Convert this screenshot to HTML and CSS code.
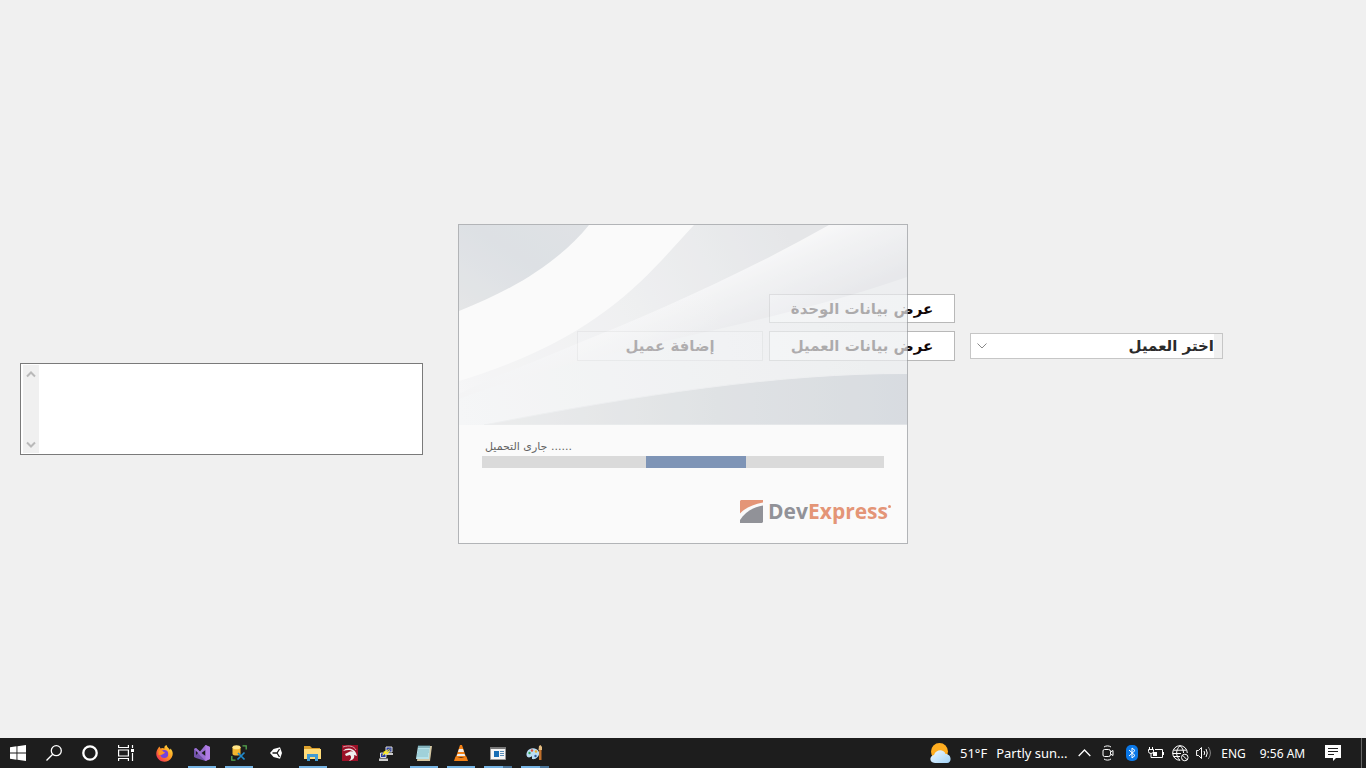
FILE: index.html
```html
<!DOCTYPE html>
<html lang="ar">
<head>
<meta charset="utf-8">
<title>اختر العميل</title>
<link rel="stylesheet" href="styles.css">
</head>
<body>
<div class="desktop">
  <main class="form">
    <div class="memo">
      <div class="memo-scroll" aria-hidden="true">
        <svg width="10" height="8" viewBox="0 0 10 8"><path d="M1 6.500 5 2.500 9 6.500"/></svg>
        <svg width="10" height="8" viewBox="0 0 10 8"><path d="M1 1.500 5 5.500 9 1.500"/></svg>
      </div>
      <textarea class="memo-text" dir="rtl" aria-label="ملاحظات"></textarea>
    </div>
    <div class="actions" dir="rtl">
      <button class="action unit" type="button">عرض بيانات الوحدة</button>
      <button class="action" type="button">عرض بيانات العميل</button>
      <button class="action" type="button" disabled>إضافة عميل</button>
    </div>
    <div class="combo">
      <svg class="combo-arrow" width="10" height="6" viewBox="0 0 10 6"><path d="M.5.5 5 5 9.500.5"/></svg>
      <select class="combo-select" dir="rtl" aria-label="اختر العميل"><option>اختر العميل</option></select>
    </div>
    <section class="splash" role="dialog" aria-label="DevExpress">
      <svg class="splash-art" viewBox="0 0 448 200" preserveAspectRatio="none" aria-hidden="true">
        <defs>
          <linearGradient id="a" x1="0" y1="1" x2="1" y2="0"><stop offset="0" stop-color="#e0e2e4"/><stop offset=".55" stop-color="#d5dae0"/><stop offset="1" stop-color="#d9dde1"/></linearGradient>
          <linearGradient id="b" gradientUnits="userSpaceOnUse" x1="0" y1="170" x2="330" y2="10"><stop offset="0" stop-color="#f9f9fa"/><stop offset=".55" stop-color="#eeeff1"/><stop offset="1" stop-color="#e1e3e6"/></linearGradient>
          <linearGradient id="c" gradientUnits="userSpaceOnUse" x1="285" y1="35" x2="315" y2="105"><stop offset="0" stop-color="#fcfcfd"/><stop offset=".35" stop-color="#f2f3f5"/><stop offset="1" stop-color="#e4e5e9"/></linearGradient>
          <linearGradient id="d" gradientUnits="userSpaceOnUse" x1="0" y1="190" x2="448" y2="90"><stop offset="0" stop-color="#f8f9fa"/><stop offset=".5" stop-color="#f1f3f5"/><stop offset="1" stop-color="#eceef0"/></linearGradient>
          <linearGradient id="e"><stop offset="0" stop-color="#eaebec"/><stop offset=".55" stop-color="#d9dde0"/><stop offset="1" stop-color="#ced3da"/></linearGradient>
          <linearGradient id="f"><stop offset="0" stop-color="#f6f7f8" stop-opacity=".9"/><stop offset=".6" stop-color="#fafafb" stop-opacity="0"/></linearGradient>
        </defs>
        <path fill="#fff" d="M0 0H448V200H0Z"/>
        <path fill="url(#a)" d="M0 0H130C104 32 62 62 0 86Z"/>
        <path fill="url(#b)" d="M235 0C189 49 145 112 0 156V200H448V0Z"/>
        <path fill="url(#c)" d="M370 0C285 48 195 88 115 120 70 139 30 154 0 169V200H448V0Z"/>
        <path fill="url(#f)" d="M370 0C285 48 195 88 115 120 70 139 30 154 0 169V200H448V0Z"/>
        <path fill="url(#d)" d="M448 52C365 81 270 102 180 122 110 138 50 155 0 174V200H448Z"/>
        <path fill="url(#e)" stroke="#edeff1" d="M449 148.500C320 148 180 170 25 200H449Z"/>
      </svg>
      <div class="splash-body">
        <label class="splash-label" for="load">جارى التحميل ......</label>
        <div class="load" id="load" role="progressbar" aria-label="جارى التحميل"><div class="load-bar"></div></div>
        <div class="brand">
          <svg width="23" height="23" viewBox="0 0 23 23" aria-hidden="true"><path fill="#e06f45" d="M1 0H23V2.500C13 4.500 5 8 0 13.500V1Z"/><path fill="#6a6b74" d="M23 5.500V22L22 23H0V20C5 12 13 7 23 5.500Z"/></svg>
          <span class="brand-name">Dev<span class="brand-accent">Express</span></span><span class="brand-dot"></span>
        </div>
      </div>
    </section>
  </main>
  <nav class="taskbar" aria-label="Taskbar">
    <div class="system">
      <button class="task" aria-label="Start"><svg width="16" height="16" viewBox="0 0 16 16" fill="#fff"><path d="M0 2.200 6.500 1.300V7.600H0ZM7.400 1.200 16 0V7.600H7.400ZM0 8.400H6.500V14.700L0 13.800ZM7.400 8.400H16V16L7.400 14.800Z"/></svg></button>
      <button class="task" aria-label="Search"><svg width="16" height="16" viewBox="0 0 16 16" fill="none" stroke="#fff" stroke-width="1.300"><circle cx="10.300" cy="5.700" r="5"/><path d="M6.700 9.300.5 15.500"/></svg></button>
      <button class="task" aria-label="Cortana"><svg width="16" height="16" viewBox="0 0 16 16" fill="none" stroke="#fff" stroke-width="2.300"><circle cx="8" cy="8" r="6.700"/></svg></button>
      <button class="task" aria-label="Task view"><svg width="16" height="16" viewBox="0 0 16 16" fill="none" stroke="#fff" stroke-width="1.200"><path d="M.6 0V2.500H10.400V0M.6 5H10.400V11H.6ZM.6 16V13.500H10.400V16M14.500 0V3M14.500 8V16"/><path fill="#fff" stroke="none" d="M13 4H16V7H13Z"/></svg></button>
    </div>
    <div class="apps">
      <button class="task" aria-label="Firefox"><svg width="17" height="17" viewBox="0 0 17 17"><defs><linearGradient id="ff" x1="1" y1="0" x2="0" y2="1"><stop stop-color="#fff24a"/><stop offset=".45" stop-color="#ff9820"/><stop offset="1" stop-color="#ed1762"/></linearGradient></defs><path fill="url(#ff)" d="M2 3.500 3.300 1.500 4.500 3.500C6 2.500 7.500 3 8.500 3.500 8 2 9 .5 10.500 0 11 2.500 13 3 14 5L14.500 3.500C17 6 17.500 9.500 15.500 12.800 13 17 7 18 3.300 15-.5 12-.5 7 2 3.500Z"/><circle cx="8.300" cy="9" r="3.900" fill="#7542dd"/><path fill="#ff961f" d="M2.500 6C4.500 4.500 7 5.500 7.500 7L9 7.300C8.500 9 6.500 8.500 6.200 9.700L2.500 10Z"/></svg></button>
      <button class="task open" aria-label="Visual Studio"><svg width="16" height="16" viewBox="0 0 16 16"><path fill="#7252aa" d="M0 4 2 3 11.500 12.500V16L2 13 0 12Z"/><path fill="#9a70d1" d="M11.500 0 16 2V14L11.500 16 2 6 0 4 2 3 6 6.500Z"/><path fill="#1d1d1d" d="M2 6V10L4 8ZM11.500 5V11L7.500 8Z"/><path fill="#b07be5" d="M11.500 0 16 2V14L11.500 16Z"/></svg></button>
      <button class="task open" aria-label="Database tools"><svg width="16" height="16" viewBox="0 0 16 16"><path fill="none" stroke="#55aa50" stroke-width="1.300" d="M11.500.8H15.200V4.500M.8 11V15.200H4.500"/><path fill="#f3b62e" d="M1.500 2V9C2 11 9 11 9.500 9V2Z"/><ellipse cx="5.500" cy="2.200" rx="4" ry="2" fill="#ffe487"/><path fill="none" stroke="#218bcc" stroke-width="1.700" d="M7 8 13.500 14.500M13.500 7.500 6.500 14.500"/></svg></button>
      <button class="task" aria-label="Unity"><svg width="12" height="12" viewBox="0 0 12 12"><path fill="#fff" d="M0 6 3.500 2 10 .3 12 6 10 11.700 3.500 10Z"/><path fill="none" stroke="#1d1d1d" stroke-width="1.300" d="M2.500 6H7L9.500 2M7 6 9.500 10"/></svg></button>
      <button class="task open" aria-label="File Explorer"><svg width="17" height="15" viewBox="0 0 17 15"><path fill="#dca02c" d="M0 0H6L8 2H16V5H0Z"/><path fill="#ffdc79" d="M0 3H17V13H0Z"/><path fill="#419bd2" d="M3 8H14V15H11V11H6V15H3Z"/></svg></button>
      <button class="task" aria-label="Dragon"><svg width="16" height="16" viewBox="0 0 16 16"><path fill="#9b1027" d="M0 0H16V16H0Z"/><path fill="#eee" d="M1 6C4 2 12 3 14 8L15 11 12 10C13 13 11 15 7 16 9 14 10 12 8 10L4 11 3 9 7 7C8 6 10 6 11 7 9 4 5 5 1 6Z"/><path fill="none" stroke="#d9a0a8" d="M1 2C7 0 12 1 14 5"/></svg></button>
      <button class="task" aria-label="PuTTY"><svg width="15" height="15" viewBox="0 0 15 15"><g fill="#283dac" stroke="#ddd"><path d="M7 1H13V6H7ZM1.500 7H7V11.500H1.500Z"/></g><path fill="#ccc" d="M6 7H14V9H6ZM0 12.500H9V15H0Z"/><path fill="#ffed22" d="M12 2 7 6H9L3 10 5 6H4Z"/><path fill="#ffed22" d="M12 3 8 9 7 7Z"/></svg></button>
      <button class="task open" aria-label="Notepad"><svg width="16" height="16" viewBox="0 0 16 16"><path fill="#d3c6a2" d="M3 1H16L14 16H1Z"/><path fill="#b7e2ea" d="M2 1H14L13 14H0Z"/><path stroke="#548792" d="M3 0V3M5 0V3M7 0V3M9 0V3M11 0V3M13 0V3"/><path stroke="#75b1bd" stroke-width=".7" d="M2 5H13M2 7H13M1 9H12M1 11H12"/></svg></button>
      <button class="task open" aria-label="VLC"><svg width="14" height="16" viewBox="0 0 14 16"><path fill="#f38116" d="M6 0H8L12 12H2Z"/><path fill="#eee" d="M5 4H9L10 7H4ZM3.500 9H10.500L11.300 11H2.700Z"/><path fill="#f38116" d="M1.500 11.500H2.500C4 13 10 13 11.500 11.500H12.500L14 16H0Z"/></svg></button>
      <button class="task open many" aria-label="Application"><svg width="16" height="13" viewBox="0 0 16 13"><path fill="#f6f6f6" stroke="#999" d="M.5.5H15.500V12.500H.5Z"/><path fill="#777" d="M0 0H16V2H0Z"/><path fill="#176eb5" d="M4 4H9V10H4Z"/><path stroke="#5a8eb8" d="M10 4.500H14M10 6.500H14M10 8.500H14"/></svg></button>
      <button class="task open many" aria-label="Paint"><svg width="17" height="16" viewBox="0 0 17 16"><path fill="#b9dcf3" d="M1 7C3 2 11 2 13 7 14 11 10 15 6 14L6 11C3 14-1 12 1 7Z"/><circle cx="3.500" cy="8" r="1.200" fill="#33a35a"/><circle cx="6" cy="5.500" r="1.200" fill="#df4d3b"/><circle cx="10" cy="6.500" r="1.200" fill="#e7b22e"/><circle cx="9.500" cy="11" r="1.200" fill="#315b9c"/><path fill="#c1702b" d="M13 5H15.500V15H13Z"/><path fill="#e5bc80" d="M12.500 5 13 1 14.500 0 16 2V5Z"/></svg></button>
    </div>
    <div class="tray" lang="en">
      <button class="weather"><svg width="21" height="20" viewBox="0 0 21 20"><defs><linearGradient id="cl" x1="0" y1="0" x2="1" y2="1"><stop stop-color="#f3f9ff"/><stop offset="1" stop-color="#a0d3f8"/></linearGradient></defs><circle cx="9.500" cy="8.500" r="8.500" fill="#ffad20"/><path fill="url(#cl)" d="M5 20C-1 20-1 13 4 12 6 6 14 6 15.500 11 22 11 22 20 17 20Z"/></svg><span>51°F</span><span>Partly sun...</span></button>
      <button class="icon" aria-label="Show hidden icons"><svg width="13" height="8" viewBox="0 0 13 8"><path stroke-width="1.300" d="M.7 7 6.500 1 12.300 7"/></svg></button>
      <button class="icon" aria-label="Meet now"><svg width="12" height="16" viewBox="0 0 12 16"><path d="M2 2C4 .5 7 .5 9 2M2 14C4 15.500 7 15.500 9 14M2.500 4.500H6.500Q8.500 4.500 8.500 6.500V9.500Q8.500 11.500 6.500 11.500H2.500Q1 11.500 1 10V6Q1 4.500 2.500 4.500ZM8.500 7 11 5.500V10.500L8.500 9"/></svg></button>
      <button class="icon" aria-label="Bluetooth"><svg width="12" height="16" viewBox="0 0 12 16"><rect width="12" height="16" rx="5" fill="#0a78e8" stroke="none"/><path d="M3 5 9 10.500 6 13V3L9 5.500 3 11"/></svg></button>
      <button class="icon" aria-label="Battery"><svg width="16" height="12" viewBox="0 0 16 12"><path d="M1.500 0V2.500M4.500 0V2.500M.5 2.500H5.500V4.500Q5.500 6.500 3 6.500.5 6.500.5 4.500ZM3 6.500V10.500H14.500V2.500H7M15.500 5V8"/><path fill="#fff" stroke="none" d="M5 5H9V9H5Z"/></svg></button>
      <button class="icon" aria-label="Network"><svg width="17" height="17" viewBox="0 0 17 17"><path d="M15.300 8A7.300 7.300 0 1 0 8 15.300M8 .7C3.500 5 3.500 11 8 15.300M8 .7C10.500 3 11.500 5 11.500 8M1.500 5.200H14.500M.7 8.500H9M1.500 11.500H8"/><circle cx="12.800" cy="12.500" r="3.300"/><path d="m10.500 10.200 4.600 4.600"/></svg></button>
      <button class="icon" aria-label="Volume"><svg width="16" height="14" viewBox="0 0 16 14"><path d="M.6 4.500H2.500L5.500 1.500V12.500L2.500 9.500H.6ZM8 5Q9.300 7 8 9M10 3Q12.500 7 10 11"/><path stroke="#888" d="M12.300 1Q16.500 7 12.300 13"/></svg></button>
      <button class="lang">ENG</button>
      <button class="clock">9:56 AM</button>
      <button class="notice" aria-label="Notifications"><svg width="16" height="16" viewBox="0 0 16 16"><path fill="#fff" d="M0 0H16V13H11L8 16V13H0Z"/><path stroke="#1d1d1d" d="M3 3.500H13M3 6.500H13M3 9.500H9"/></svg></button>
      <button class="peek" aria-label="Show desktop"></button>
    </div>
  </nav>
</div>
</body>
</html>
```
FILE: styles.css
```css
* { box-sizing: border-box; }
body { margin: 0; background: #f0f0f0; font-family: "Noto Sans", "Open Sans", sans-serif; }
button { margin: 0; padding: 0; border: 0; background: none; color: inherit; font: inherit; }
svg { display: block; flex: none; }

.desktop { display: flex; flex-direction: column; min-height: 100vh; }

.form {
  position: relative;
  flex: 1;
  display: flex;
  align-items: flex-start;
  padding: 294px 143px 0 20px;
}
.memo {
  flex: 0 1 403px;
  display: flex;
  height: 92px;
  margin-top: 69px;
  padding: 1px 2px;
  border: 1px solid #7a7a7a;
  background: #fff;
}
.memo-scroll {
  display: flex;
  flex-direction: column;
  align-items: center;
  justify-content: space-between;
  width: 16px;
  padding: 5px 0 4px;
  background: #f0f0f0;
}
.memo-scroll path { fill: none; stroke: #b9b9b9; stroke-width: 2; }
.memo-text { flex: 1; min-width: 0; border: 0; resize: none; outline: 0; overflow: hidden; background: #fff; }

.actions {
  display: grid;
  grid-template-columns: 186px 186px;
  gap: 8px 6px;
  margin-left: auto;
}
.action {
  height: 30px;
  border: 1px solid #b8b8b8;
  background: #fff;
  color: #140808;
  font: bold 15px/20px "DejaVu Sans", sans-serif;
}
.action.unit { grid-column: 1 / -1; width: 186px; height: 29px; }
.action:disabled { border-color: #d0d0d0; background: #f4f4f4; }

.combo {
  flex: none;
  display: flex;
  align-items: center;
  width: 253px;
  height: 26px;
  margin: 39px 0 0 15px;
  padding-left: 6px;
  border: 1px solid #c6c6c6;
  background: #fff;
}
.combo-arrow path { fill: none; stroke: #888; }
.combo-select {
  flex: 1;
  height: 24px;
  padding: 0;
  appearance: none;
  border: 0;
  border-right: 8px solid #f0f0f0;
  border-radius: 0;
  background: #fff;
  color: #2b2b2b;
  font: bold 15px/20px "DejaVu Sans", sans-serif;
}

.splash {
  position: absolute;
  top: 224px;
  left: 50%;
  width: 450px;
  height: 320px;
  margin-left: -225px;
  border: 1px solid #989b9f;
  background: #fff;
  opacity: .7;
}
.splash-art { width: 100%; height: 200px; }
.splash-body { display: flex; flex-direction: column; padding: 13px 16px 0 23px; }
.splash-label { padding-left: 3px; color: #262626; font: 11px/18px "DejaVu Sans", sans-serif; }
.load { height: 12px; margin-right: 7px; background: #d2d2d2; }
.load-bar { width: 100px; height: 100%; margin-left: 164px; background: #4e6e9e; }
.brand { display: flex; align-items: center; align-self: flex-end; margin-top: 27px; }
.brand-name { margin-left: 5px; color: #6a6b74; font: 700 21px/32px "Open Sans", sans-serif; }
.brand-accent { color: #e06f45; }
.brand-dot { width: 3px; height: 3px; margin-bottom: 10px; border-radius: 50%; background: #e06f45; }

.taskbar { display: flex; height: 30px; background: #1d1d1d; color: #fff; }
.system, .apps, .tray { display: flex; }
.apps { margin-left: 2px; }
.tray { margin-left: auto; }
.tray button { display: flex; align-items: center; justify-content: center; }
.task { position: relative; display: flex; align-items: center; justify-content: center; width: 36px; }
.apps .task { width: 37px; }
.open::after {
  content: "";
  position: absolute;
  bottom: 0;
  left: 5px;
  width: 28px;
  height: 2px;
  background: #76b4e4;
}
.many::after { background: linear-gradient(90deg, #76b4e4 19px, #4b7599 19px); }
.tray .weather { justify-content: flex-start; width: 142px; gap: 9px; font-size: 13px; white-space: nowrap; }
.icon { width: 24px; }
.icon svg { fill: none; stroke: #fff; }
.lang { width: 35px; font-size: 12px; }
.clock { width: 63px; font-size: 12px; white-space: nowrap; }
.notice { width: 38px; }
.tray .peek { width: 5px; margin-left: 9px; border-left: 1px solid #666; }
```
